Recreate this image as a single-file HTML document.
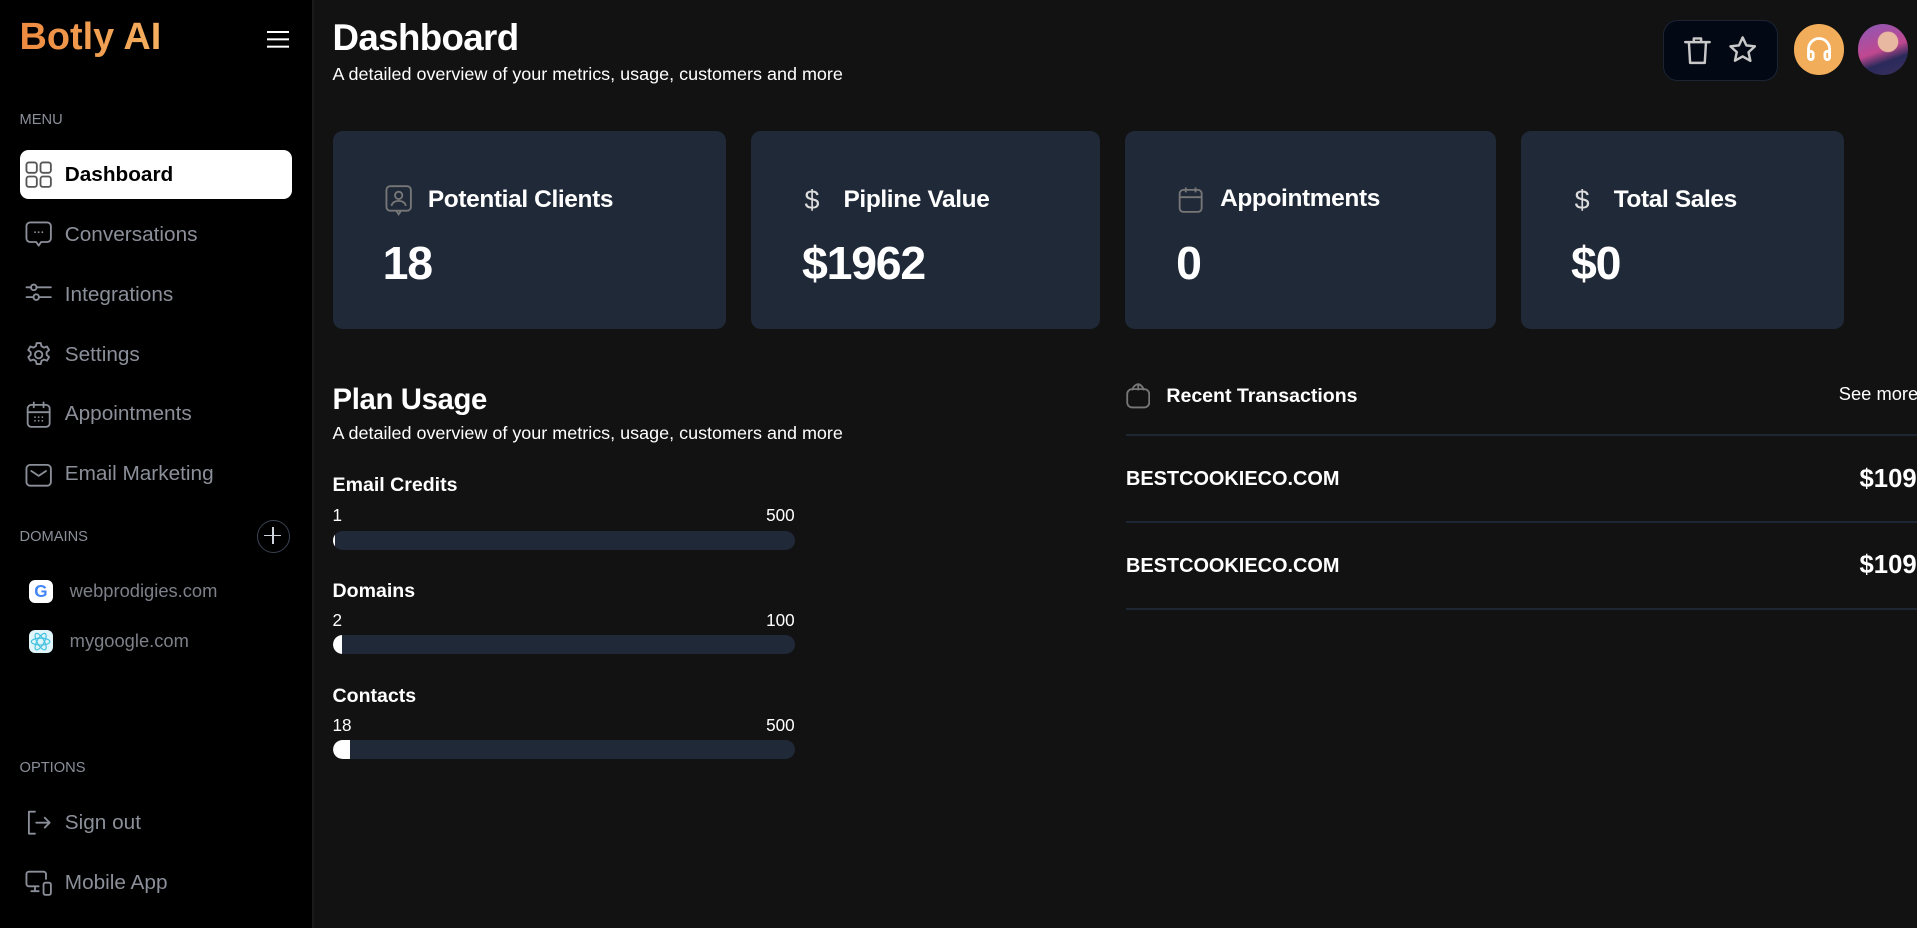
<!DOCTYPE html>
<html><head><meta charset="utf-8"><style>
html,body{margin:0;padding:0;background:#121212;overflow:hidden}
body{width:1568px;height:759px;zoom:1.22258;position:relative;font-family:"Liberation Sans",sans-serif;color:#fff}
.a{position:absolute}
.side{left:0;top:0;width:255px;height:759px;background:#000}
.sep{left:255px;top:0;width:2px;height:759px;background:#1a1a1a}
.logo{left:16px;top:13px;font-size:31px;font-weight:bold;background:linear-gradient(90deg,#ee8a40,#f4b060);-webkit-background-clip:text;color:transparent}
.lab{font-size:12px;color:#8a8f9a;left:16px}
.nav{left:20px;font-size:17px;color:#8b8f99;display:flex;align-items:center;gap:9px}
.nav svg{width:24px;height:24px;fill:none;stroke:#8b8f99;stroke-width:1.5;stroke-linecap:round;stroke-linejoin:round}
.act{left:16px;top:123px;width:223px;height:40px;background:#fff;border-radius:7px}
.card{top:107px;height:162px;background:#202938;border-radius:8px}
.card .t{position:absolute;top:44px;font-size:20px;font-weight:bold;display:flex;align-items:center;gap:12px;letter-spacing:-0.3px}
.card .v{position:absolute;top:86px;font-size:38px;font-weight:bold;letter-spacing:-1px}
.bar{left:272px;width:378px;height:16px;background:#202938;border-radius:8px;overflow:hidden}
.bar i{display:block;height:16px;background:#fff;border-radius:8px 0 0 8px}
.pl{font-size:16px;font-weight:bold;left:272px}
.num{font-size:14px;left:272px;width:378px;display:flex;justify-content:space-between}
.hr{left:921px;width:647px;height:2px;background:#1e2533}
.tx{left:921px;font-size:16.3px;font-weight:bold}
</style></head><body>
<div class="a side"></div><div class="a sep"></div>
<div class="a logo">Botly AI</div>
<div class="a" style="left:218px;top:25px;width:18px;height:2px;background:#fff;box-shadow:0 6px 0 #fff,0 12px 0 #fff"></div>
<div class="a lab" style="top:92px">MENU</div>
<div class="a act"></div>
<div class="a nav" style="top:131px;color:#000;font-weight:bold"><svg viewBox="0 0 24 24" style="stroke:#555"><rect x="2" y="2" width="8.5" height="8.5" rx="2"/><rect x="13.5" y="2" width="8.5" height="8.5" rx="2"/><rect x="2" y="13.5" width="8.5" height="8.5" rx="2"/><rect x="13.5" y="13.5" width="8.5" height="8.5" rx="2"/></svg>Dashboard</div>
<div class="a nav" style="top:180px"><svg viewBox="0 0 24 24"><path d="M5 2h14a3 3 0 0 1 3 3v10a3 3 0 0 1-3 3h-5l-2 3-2-3H5a3 3 0 0 1-3-3V5a3 3 0 0 1 3-3z"/><path d="M9 10h.01M12 10h.01M15 10h.01"/></svg>Conversations</div>
<div class="a nav" style="top:229px"><svg viewBox="0 0 24 24"><path d="M2 6h4M10 6h12M2 14h6M12 14h10"/><circle cx="8" cy="6" r="2.3"/><circle cx="10" cy="14" r="2.3"/></svg>Integrations</div>
<div class="a nav" style="top:278px"><svg viewBox="0 0 24 24"><circle cx="12" cy="12" r="3"/><path d="M10.3 2.5h3.4l.6 2.6 2 1.1 2.5-.9 1.7 2.9-2 1.8v2.2l2 1.8-1.7 2.9-2.5-.9-2 1.1-.6 2.6h-3.4l-.6-2.6-2-1.1-2.5.9-1.7-2.9 2-1.8v-2.2l-2-1.8 1.7-2.9 2.5.9 2-1.1z"/></svg>Settings</div>
<div class="a nav" style="top:327px"><svg viewBox="0 0 24 24"><rect x="3" y="4" width="18" height="18" rx="3"/><path d="M8 2v4M16 2v4M3 10h18M9 14h.01M12 14h.01M15 14h.01M9 17h.01M12 17h.01M15 17h.01"/></svg>Appointments</div>
<div class="a nav" style="top:376px"><svg viewBox="0 0 24 24"><rect x="2" y="4" width="20" height="17" rx="3"/><path d="M6 9l6 4 6-4"/></svg>Email Marketing</div>
<div class="a lab" style="top:433px">DOMAINS</div>
<div class="a" style="left:210px;top:425px;width:27px;height:27px;border:1.5px solid #3a4252;border-radius:50%;box-sizing:border-box"><div class="a" style="left:5px;top:11.5px;width:14px;height:1.5px;background:#cfd3da"></div><div class="a" style="left:11.5px;top:5px;width:1.5px;height:14px;background:#cfd3da"></div></div>
<div class="a" style="left:24px;top:474px;width:19px;height:19px;background:#fff;border-radius:5px;font-size:14px;font-weight:bold;text-align:center;line-height:19px;color:#4285f4">G</div>
<div class="a" style="left:57px;top:474px;font-size:15px;color:#7d8088">webprodigies.com</div>
<div class="a" style="left:24px;top:515px;width:19px;height:19px;background:#dff5fa;border-radius:5px"><svg viewBox="0 0 20 20" width="19" height="19" fill="none" stroke="#40c0e0" stroke-width="1"><ellipse cx="10" cy="10" rx="8" ry="3"/><ellipse cx="10" cy="10" rx="8" ry="3" transform="rotate(60 10 10)"/><ellipse cx="10" cy="10" rx="8" ry="3" transform="rotate(120 10 10)"/></svg></div>
<div class="a" style="left:57px;top:515px;font-size:15px;color:#7d8088">mygoogle.com</div>
<div class="a lab" style="top:622px">OPTIONS</div>
<div class="a nav" style="top:661px"><svg viewBox="0 0 24 24"><path d="M9 3H4v18h5M10 12h11M17 8l4 4-4 4"/></svg>Sign out</div>
<div class="a nav" style="top:710px"><svg viewBox="0 0 24 24"><path d="M18 9V5a2 2 0 0 0-2-2H4a2 2 0 0 0-2 2v8a2 2 0 0 0 2 2h8M6 19h6M9 15v4"/><rect x="16" y="12" width="6" height="10" rx="1.5"/></svg>Mobile App</div>

<div class="a" style="left:272px;top:14px;font-size:30px;font-weight:bold;letter-spacing:-0.5px">Dashboard</div>
<div class="a" style="left:272px;top:52px;font-size:14.7px">A detailed overview of your metrics, usage, customers and more</div>
<div class="a" style="left:1360px;top:16px;width:94px;height:50px;background:#020814;border:1px solid #1c2434;border-radius:12px;box-sizing:border-box">
<svg class="a" style="left:17px;top:13px" width="22" height="24" viewBox="0 0 22 24" fill="none" stroke="#c8c8c8" stroke-width="2" stroke-linecap="round" stroke-linejoin="round"><path d="M1 5h20M8 5V2h6v3M4 5l1 17h12l1-17"/></svg>
<svg class="a" style="left:53px;top:12px" width="24" height="24" viewBox="0 0 24 24" fill="none" stroke="#c8c8c8" stroke-width="2" stroke-linejoin="round"><path d="M12 2l3 6.5 7 .8-5.2 4.8 1.5 7L12 17.5 5.7 21l1.5-7L2 9.3l7-.8z"/></svg></div>
<div class="a" style="left:1467px;top:20px;width:41px;height:41px;border-radius:50%;background:#f2ad5a"><svg class="a" style="left:9px;top:9px" width="23" height="23" viewBox="0 0 24 24" fill="none" stroke="#fff" stroke-width="2.4" stroke-linecap="round"><path d="M3 16v-4a9 9 0 0 1 18 0v4"/><rect x="3" y="14" width="4" height="7" rx="2"/><rect x="17" y="14" width="4" height="7" rx="2"/></svg></div>
<div class="a" style="left:1520px;top:20px;width:41px;height:41px;border-radius:50%;background:radial-gradient(circle at 60% 35%,#e8b8a0 0 22%,transparent 24%),linear-gradient(160deg,#8a5ab8,#c04890 50%,#2a2a5a 70%,#3a3060)"></div>

<div class="a card" style="left:272px;width:322px"><div class="t" style="left:42px"><svg width="24" height="26" viewBox="0 0 24 26" fill="none" stroke="#777" stroke-width="1.5"><rect x="2" y="1" width="20" height="20" rx="3"/><circle cx="12" cy="8.5" r="3"/><path d="M6 17c1-3 3.5-4 6-4s5 1 6 4M10 21l2 3 2-3"/></svg>Potential Clients</div><div class="v" style="left:41px">18</div></div>
<div class="a card" style="left:614px;width:286px"><div class="t" style="left:44px;gap:20px"><span style="font-weight:normal;font-size:22px;color:#ddd">$</span>Pipline Value</div><div class="v" style="left:42px">$1962</div></div>
<div class="a card" style="left:920px;width:304px"><div class="t" style="left:42px"><svg width="24" height="24" viewBox="0 0 24 24" fill="none" stroke="#777" stroke-width="1.5"><rect x="3" y="4" width="18" height="18" rx="3"/><path d="M8 2v4M16 2v4M3 10h18M9 14h.01M12 14h.01M15 14h.01M9 17h.01M12 17h.01M15 17h.01"/></svg>Appointments</div><div class="v" style="left:42px">0</div></div>
<div class="a card" style="left:1244px;width:264px"><div class="t" style="left:44px;gap:20px"><span style="font-weight:normal;font-size:22px;color:#ddd">$</span>Total Sales</div><div class="v" style="left:41px">$0</div></div>

<div class="a" style="left:272px;top:313px;font-size:24px;font-weight:bold;letter-spacing:-0.3px">Plan Usage</div>
<div class="a" style="left:272px;top:346px;font-size:14.7px">A detailed overview of your metrics, usage, customers and more</div>
<div class="a pl" style="top:388px">Email Credits</div>
<div class="a num" style="top:414px"><span>1</span><span>500</span></div>
<div class="a bar" style="top:434px"><i style="width:2px"></i></div>
<div class="a pl" style="top:474px">Domains</div>
<div class="a num" style="top:500px"><span>2</span><span>100</span></div>
<div class="a bar" style="top:519px"><i style="width:8px"></i></div>
<div class="a pl" style="top:560px">Contacts</div>
<div class="a num" style="top:586px"><span>18</span><span>500</span></div>
<div class="a bar" style="top:605px"><i style="width:14px"></i></div>

<svg class="a" style="left:921px;top:313px" width="20" height="22" viewBox="0 0 20 22" fill="none" stroke="#777" stroke-width="1.5"><rect x="1" y="5" width="18" height="15" rx="4"/><path d="M5 6c1-4 4-5 5-5s3 1 5 5M10 1v5"/></svg>
<div class="a" style="left:954px;top:315px;font-size:16px;font-weight:bold">Recent Transactions</div>
<div class="a" style="left:1504px;top:313px;font-size:15px;white-space:nowrap">See more</div>
<div class="a hr" style="top:355px"></div>
<div class="a tx" style="top:383px">BESTCOOKIECO.COM</div>
<div class="a" style="left:1521px;top:380px;font-size:21px;font-weight:bold">$109</div>
<div class="a hr" style="top:426px"></div>
<div class="a tx" style="top:454px">BESTCOOKIECO.COM</div>
<div class="a" style="left:1521px;top:451px;font-size:21px;font-weight:bold">$109</div>
<div class="a hr" style="top:497px"></div>
</body></html>
